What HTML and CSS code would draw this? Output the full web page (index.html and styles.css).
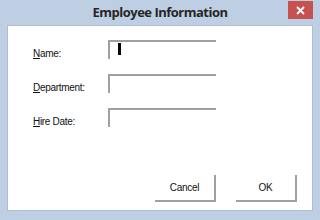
FILE: index.html
```html
<!DOCTYPE html>
<html lang="en">
<head>
    <meta charset="UTF-8">
    <meta name="viewport" content="width=device-width, initial-scale=1.0">
    <title>Employee Information</title>
    <link rel="stylesheet" href="styles.css">
</head>
<body>
    <div class="window">
        <div class="title-bar">
            <span></span>
            <p class="title">Employee Information</p>
            <div class="close-cell">
                <button class="close-btn" aria-label="Close">
                    <svg width="9" height="9" viewBox="0 0 9 9">
                        <path d="M1 1 L8 8 M8 1 L1 8" stroke="#fff" stroke-width="1.8" fill="none"/>
                    </svg>
                </button>
            </div>
        </div>
        <div class="client">
            <form class="employee-form">
                <div class="row">
                    <label for="name"><u>N</u>ame:</label>
                    <div class="field">
                        <input type="text" id="name">
                        <span class="caret"></span>
                    </div>
                </div>
                <div class="row">
                    <label for="department"><u>D</u>epartment:</label>
                    <div class="field"><input type="text" id="department"></div>
                </div>
                <div class="row">
                    <label for="hire-date"><u>H</u>ire Date:</label>
                    <div class="field"><input type="text" id="hire-date"></div>
                </div>
            </form>
            <div class="actions">
                <button class="btn">Cancel</button>
                <button class="btn">OK</button>
            </div>
        </div>
    </div>
</body>
</html>
```

FILE: styles.css
```css
body {
    margin: 0;
    padding: 0;
    overflow: hidden;
}

.window {
    width: 320px;
    height: 220px;
    background-color: #bfcfe3;
    display: flex;
    flex-direction: column;
    box-sizing: border-box;
    font-family: "Liberation Sans", Arial, sans-serif;
}

.title-bar {
    height: 25px;
    display: grid;
    grid-template-columns: 1fr auto 1fr;
    align-items: start;
}

.title {
    margin: 0;
    padding-top: 3px;
    font-family: "Open Sans", "Noto Sans", sans-serif;
    font-size: 13px;
    font-weight: 700;
    letter-spacing: -0.5px;
    color: #262626;
}

.close-cell {
    display: flex;
    justify-content: flex-end;
    padding-right: 7px;
}

.close-btn {
    width: 25px;
    height: 18px;
    margin-top: 1px;
    padding: 0;
    border: none;
    background-color: #c75050;
    display: flex;
    justify-content: center;
    align-items: center;
}

.client {
    flex: 1;
    margin: 0 7px 9px 7px;
    background-color: #fff;
    border: 1px solid #aebdd0;
    padding: 14px 15px 8px 25px;
    display: flex;
    flex-direction: column;
}

.employee-form {
    display: flex;
    flex-direction: column;
    gap: 15px;
}

.row {
    display: flex;
    align-items: flex-start;
}

.row label {
    width: 75px;
    padding-top: 8px;
    font-size: 10px;
    letter-spacing: -0.3px;
    color: #111;
}

.field {
    position: relative;
}

.field input {
    width: 108px;
    height: 19px;
    box-sizing: border-box;
    margin: 0;
    padding: 0;
    border: none;
    border-top: 2px solid #a0a0a0;
    border-left: 2px solid #a0a0a0;
    outline: none;
    background: #fff;
}

.caret {
    position: absolute;
    left: 10px;
    top: 3px;
    width: 3px;
    height: 12px;
    background-color: #000;
}

.actions {
    margin-top: auto;
    display: flex;
    justify-content: flex-end;
    gap: 20px;
}

.btn {
    width: 61px;
    height: 27px;
    padding: 0;
    background-color: #fff;
    border: none;
    border-right: 2px solid #a0a0a0;
    border-bottom: 2px solid #a0a0a0;
    font-family: "Liberation Sans", Arial, sans-serif;
    font-size: 10px;
    letter-spacing: -0.3px;
    color: #111;
}
```
